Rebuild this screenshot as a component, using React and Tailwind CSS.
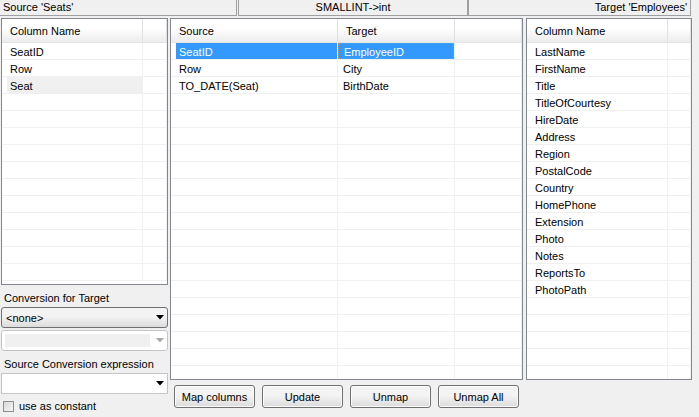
import React from "react";

const font = { fontFamily: '"Liberation Sans", Arial, sans-serif' };

function Arrow({ gray }) {
  return (
    <svg width="8" height="5" viewBox="0 0 8 5" className="shrink-0">
      <path d="M0 0 H8 L4 4.5 Z" fill={gray ? "#a8a8a8" : "#000"} />
    </svg>
  );
}

function Grid({ cols, header, rows, height, selected, inactive, count }) {
  const list = [...rows];
  while (list.length < count) list.push(cols.map(() => ""));
  return (
    <div className={`border border-[#828790] bg-white overflow-hidden ${height}`}>
      <div className="flex h-[24px] border-b border-[#e5e5e5] bg-gradient-to-b from-white from-40% to-[#ececec]">
        {cols.map((w, i) => (
          <div
            key={i}
            className={`${w} shrink-0 flex items-center pl-[8px] pt-[2px] border-r border-[#e1e1e1]`}
          >
            {header[i]}
          </div>
        ))}
      </div>
      {list.map((r, ri) => (
        <div key={ri} className="flex h-[17px] border-b border-[#f0f0f0]">
          {cols.map((w, ci) => {
            const sel = ri === selected;
            const ina = ri === inactive && ci === 0;
            return (
              <div key={ci} className={`${w} shrink-0 h-full border-r border-[#f0f0f0] flex`}>
                {ci === 0 ? (
                  <div
                    className={`ml-[5px] flex-1 flex items-center pl-[3px] pt-[2px] ${
                      sel ? "bg-[#3399ff] text-white" : ina ? "bg-[#f0f0f0]" : ""
                    }`}
                  >
                    {r[ci]}
                  </div>
                ) : (
                  <div
                    className={`flex-1 flex items-center pl-[5px] pt-[2px] ${
                      sel && ci === 1
                        ? "bg-[#3399ff] text-white border border-dotted border-[#e8872b] pl-[4px]"
                        : ""
                    }`}
                  >
                    {r[ci]}
                  </div>
                )}
              </div>
            );
          })}
        </div>
      ))}
    </div>
  );
}

function Button({ label }) {
  return (
    <div className="w-[81px] h-[23px] rounded-[3px] border border-[#707070] bg-gradient-to-b from-[#f3f3f3] from-45% to-[#dcdcdc] shadow-[inset_0_0_0_1px_#fcfcfc] flex items-center justify-center pt-[1px]">
      {label}
    </div>
  );
}

export default function App() {
  const right = [
    "LastName",
    "FirstName",
    "Title",
    "TitleOfCourtesy",
    "HireDate",
    "Address",
    "Region",
    "PostalCode",
    "Country",
    "HomePhone",
    "Extension",
    "Photo",
    "Notes",
    "ReportsTo",
    "PhotoPath",
  ];
  return (
    <div
      className="w-[699px] h-[417px] bg-[#f0f0f0] text-[11px] text-black overflow-hidden leading-none"
      style={font}
    >
      {/* status-like header bar */}
      <div className="flex h-[16px]">
        <div className="w-[237px] border-r border-b border-[#a0a0a0] flex items-center pl-[3px]">
          Source 'Seats'
        </div>
        <div className="w-[1px]" />
        <div className="w-[230px] border-l border-r border-b border-[#a0a0a0] flex items-center justify-center">
          SMALLINT-&gt;int
        </div>
        <div className="w-[223px] border-l border-r border-b border-[#a0a0a0] flex items-center justify-end pr-[3px]">
          Target 'Employees'
        </div>
      </div>

      <div className="flex pt-[2px] pl-[1px]">
        {/* left column */}
        <div className="w-[167px] flex flex-col">
          <Grid
            cols={["w-[141px]", "w-[24px]"]}
            header={["Column Name", ""]}
            rows={[["SeatID", ""], ["Row", ""], ["Seat", ""]]}
            height="h-[267px]"
            inactive={2}
            count={14}
          />
          <div className="h-[22px] flex items-center pl-[3px] pt-[4px]">Conversion for Target</div>
          <div className="h-[21px] rounded-[3px] border border-[#707070] bg-gradient-to-b from-[#f3f3f3] from-45% to-[#dcdcdc] flex items-center pl-[4px] pr-[3px] justify-between">
            <span className="pt-[1px]">&lt;none&gt;</span>
            <Arrow />
          </div>
          <div className="mt-[2px] h-[21px] rounded-[3px] border border-[#c5c5c5] bg-white flex items-center pl-[3px] pr-[3px] gap-[6px]">
            <div className="flex-1 h-[13px] bg-[#f0f0f0]" />
            <Arrow gray />
          </div>
          <div className="h-[22px] flex items-center pl-[3px] pt-[4px]">Source Conversion expression</div>
          <div className="h-[21px] border border-[#c5c5c5] bg-white flex items-center justify-end pr-[3px]">
            <Arrow />
          </div>
          <div className="flex items-center mt-[6px] pl-[2px] gap-[5px]">
            <div className="w-[11px] h-[11px] border border-[#8e8f8f] bg-gradient-to-br from-[#d8d8d8] to-[#f6f6f6]" />
            <span className="pt-[1px]">use as constant</span>
          </div>
        </div>

        {/* middle column */}
        <div className="ml-[2px] w-[353px] flex flex-col">
          <Grid
            cols={["w-[167px]", "w-[117px]", "w-[67px]"]}
            header={["Source", "Target", ""]}
            rows={[
              ["SeatID", "EmployeeID", ""],
              ["Row", "City", ""],
              ["TO_DATE(Seat)", "BirthDate", ""],
            ]}
            height="h-[362px]"
            selected={0}
            count={20}
          />
          <div className="flex mt-[5px] pl-[4px] gap-[7px]">
            <Button label="Map columns" />
            <Button label="Update" />
            <Button label="Unmap" />
            <Button label="Unmap All" />
          </div>
        </div>

        {/* right column */}
        <div className="ml-[3px] w-[166px]">
          <Grid
            cols={["w-[141px]", "w-[23px]"]}
            header={["Column Name", ""]}
            rows={right.map((r) => [r, ""])}
            height="h-[362px]"
            count={20}
          />
        </div>
      </div>
    </div>
  );
}
